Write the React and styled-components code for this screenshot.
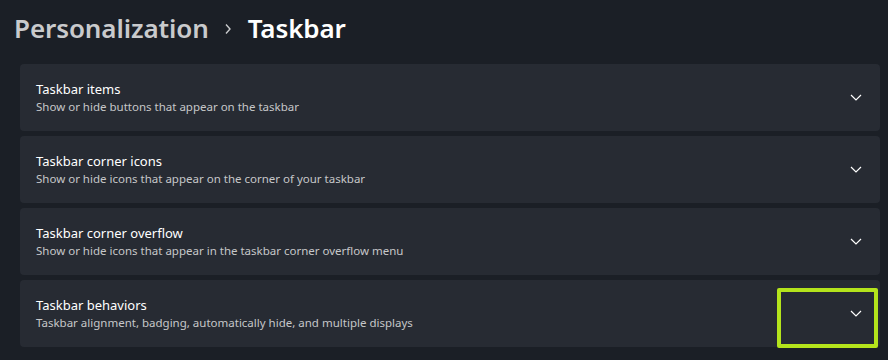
import React from "react";
import styled, { createGlobalStyle } from "styled-components";

const GlobalStyle = createGlobalStyle`
    html, body {
        margin: 0;
        padding: 0;
        background: #1b1f26;
    }
    body {
        font-family: "Noto Sans", "Open Sans", sans-serif;
        color: #ffffff;
    }
`;

const Page = styled.div`
    width: 888px;
    height: 360px;
    box-sizing: border-box;
    padding: 9px 8px 0 20px;
    background: #1b1f26;
    overflow: hidden;
`;

const Breadcrumb = styled.h1`
    display: flex;
    align-items: center;
    margin: 0 0 0 -6px;
    height: 37px;
    font-size: 26px;
    font-weight: 600;
    letter-spacing: -0.1px;
`;

const Crumb = styled.span`
    color: ${(p) => (p.current ? "#ffffff" : "#c9cacc")};
`;

const Separator = styled.span`
    display: flex;
    align-items: center;
    color: #c9cacc;
    padding: 2px 16px 0 15px;
`;

const List = styled.div`
    display: flex;
    flex-direction: column;
    gap: 5px;
    margin-top: 18px;
`;

const Card = styled.div`
    position: relative;
    display: flex;
    align-items: center;
    justify-content: space-between;
    height: 67px;
    box-sizing: border-box;
    padding: 0 16px 0 16px;
    background: #272b33;
    border-radius: 4px;
`;

const Texts = styled.div`
    display: flex;
    flex-direction: column;
    gap: 1px;
`;

const Title = styled.div`
    font-size: 13px;
    line-height: 18px;
    color: #ffffff;
`;

const Subtitle = styled.div`
    font-size: 11.5px;
    line-height: 16px;
    color: #c6c7c9;
`;

const Expand = styled.div`
    display: flex;
    align-items: center;
    justify-content: center;
    width: 16px;
    height: 16px;
    color: #ffffff;
`;

const Highlight = styled.div`
    position: absolute;
    right: 2px;
    top: 8px;
    width: 101px;
    height: 60px;
    box-sizing: border-box;
    border: 4px solid #b4e41c;
    border-radius: 2px;
    pointer-events: none;
`;

const ChevronRight = () => (
    <svg width="8" height="12" viewBox="0 0 8 12" fill="none">
        <path d="M2 1.5l4 4.5-4 4.5" stroke="currentColor" strokeWidth="1.4" />
    </svg>
);

const ChevronDown = () => (
    <svg width="12" height="7" viewBox="0 0 12 7" fill="none">
        <path d="M1 1l5 5 5-5" stroke="currentColor" strokeWidth="1.2" />
    </svg>
);

const items = [
    {
        title: "Taskbar items",
        subtitle: "Show or hide buttons that appear on the taskbar",
    },
    {
        title: "Taskbar corner icons",
        subtitle: "Show or hide icons that appear on the corner of your taskbar",
    },
    {
        title: "Taskbar corner overflow",
        subtitle:
            "Show or hide icons that appear in the taskbar corner overflow menu",
    },
    {
        title: "Taskbar behaviors",
        subtitle:
            "Taskbar alignment, badging, automatically hide, and multiple displays",
        highlighted: true,
    },
];

const App = () => {
    return (
        <Page>
            <GlobalStyle />
            <Breadcrumb>
                <Crumb>Personalization</Crumb>
                <Separator>
                    <ChevronRight />
                </Separator>
                <Crumb current>Taskbar</Crumb>
            </Breadcrumb>

            <List>
                {items.map((item) => (
                    <Card key={item.title}>
                        <Texts>
                            <Title>{item.title}</Title>
                            <Subtitle>{item.subtitle}</Subtitle>
                        </Texts>
                        <Expand>
                            <ChevronDown />
                        </Expand>
                        {item.highlighted && <Highlight />}
                    </Card>
                ))}
            </List>
        </Page>
    );
};

export default App;
